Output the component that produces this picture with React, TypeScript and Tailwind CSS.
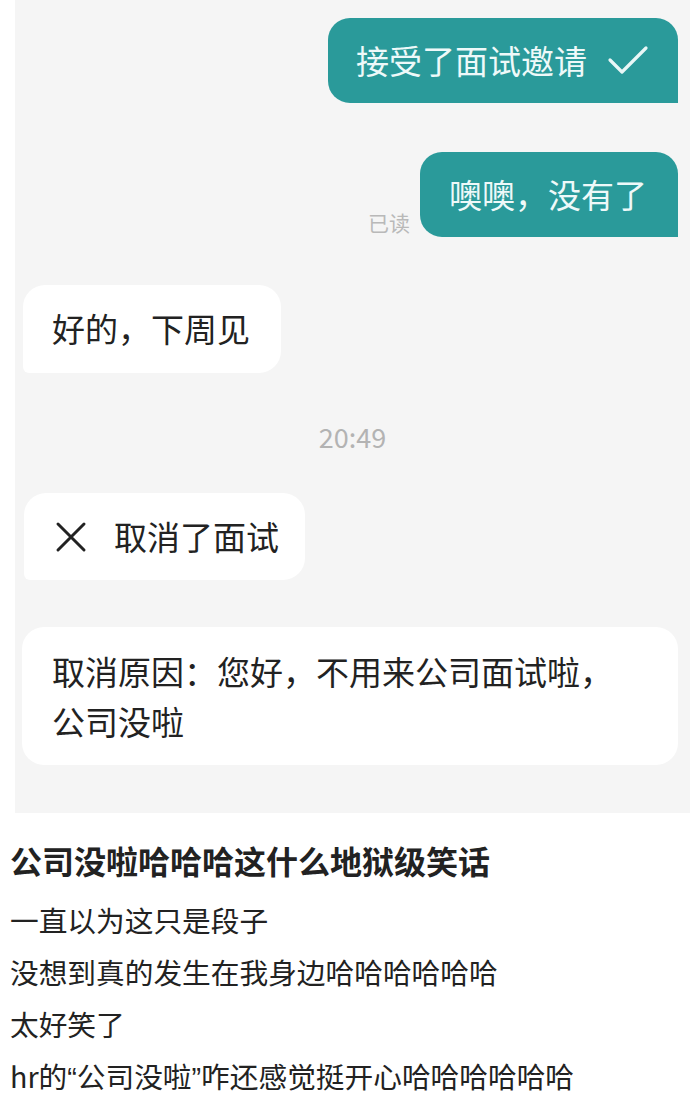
const font = { fontFamily: '"Noto Sans CJK SC", "Noto Sans", sans-serif' };

const Check = () => (
  <svg width="42" height="34" viewBox="0 0 42 34" fill="none">
    <path d="M3 16 L15 28 L39 4" stroke="#e9f7f7" strokeWidth="3.2" strokeLinecap="round" strokeLinejoin="round" />
  </svg>
);

const Cross = () => (
  <svg width="32" height="32" viewBox="0 0 32 32" fill="none">
    <path d="M3 3 L29 29 M29 3 L3 29" stroke="#222" strokeWidth="3" strokeLinecap="round" />
  </svg>
);

const App = () => {
  return (
    <div className="w-[690px] h-[1102px] bg-white text-[#222] overflow-hidden" style={font}>
      <div className="ml-[15px] h-[813px] bg-[#f5f5f5] flex flex-col pt-[18px]">
        <div className="flex justify-end pr-[12px]">
          <div className="h-[85px] w-[350px] flex items-center pl-[28px] gap-[20px] rounded-[22px] rounded-br-none bg-[#2a9a9a] text-[#eef9f9] text-[33px]">
            <span>接受了面试邀请</span>
            <Check />
          </div>
        </div>

        <div className="mt-[49px] flex justify-end items-end pr-[12px] gap-[10px]">
          <span className="text-[21px] text-[#b9b9b9] leading-none mb-[4px]">已读</span>
          <div className="h-[85px] w-[258px] flex items-center pl-[29px] rounded-[22px] rounded-br-none bg-[#2a9a9a] text-[#eef9f9] text-[33px]">
            噢噢，没有了
          </div>
        </div>

        <div className="mt-[48px] pl-[8px]">
          <div className="h-[88px] w-[258px] flex items-center pl-[29px] rounded-[22px] rounded-bl-md bg-white text-[33px]">
            好的，下周见
          </div>
        </div>

        <div className="mt-[41px] text-center text-[27px] text-[#b3b3b3] leading-[46px]">20:49</div>

        <div className="mt-[33px] pl-[9px]">
          <div className="h-[87px] w-[281px] flex items-center pl-[31px] gap-[27px] rounded-[22px] rounded-bl-md bg-white text-[33px]">
            <Cross />
            <span>取消了面试</span>
          </div>
        </div>

        <div className="mt-[47px] pl-[7px] pr-[12px]">
          <div className="h-[138px] flex flex-col justify-center pl-[30px] rounded-[22px] bg-white text-[33px] leading-[50px]">
            <span>取消原因：您好，不用来公司面试啦，</span>
            <span>公司没啦</span>
          </div>
        </div>
      </div>

      <div className="pl-[10px]">
        <h1 className="mt-[26px] text-[32px] font-bold leading-[42px]">公司没啦哈哈哈这什么地狱级笑话</h1>
        <div className="mt-[13px] text-[28.7px] leading-[52px]">
          <p>一直以为这只是段子</p>
          <p>没想到真的发生在我身边哈哈哈哈哈哈</p>
          <p>太好笑了</p>
          <p>
            hr的<span className="font-['Liberation_Sans']">“</span>公司没啦<span className="font-['Liberation_Sans']">”</span>咋还感觉挺开心哈哈哈哈哈哈
          </p>
        </div>
      </div>
    </div>
  );
};

export default App;
